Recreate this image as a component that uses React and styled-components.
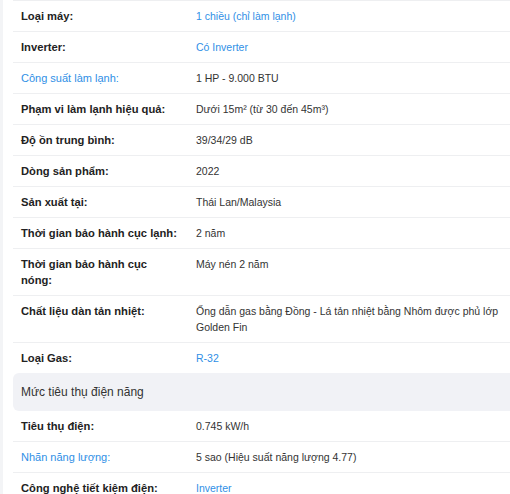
import React from "react";
import styled, { createGlobalStyle } from "styled-components";

const GlobalStyle = createGlobalStyle`
  html, body {
    margin: 0;
    padding: 0;
    background: #f3f4f6;
    font-family: "Liberation Sans", Arial, sans-serif;
    overflow: hidden;
  }
`;

const specs = [
  { label: "Loại máy:", value: "1 chiều (chỉ làm lạnh)", valueLink: true },
  { label: "Inverter:", value: "Có Inverter", valueLink: true },
  { label: "Công suất làm lạnh:", value: "1 HP - 9.000 BTU", labelLink: true },
  { label: "Phạm vi làm lạnh hiệu quả:", value: "Dưới 15m² (từ 30 đến 45m³)" },
  { label: "Độ ồn trung bình:", value: "39/34/29 dB" },
  { label: "Dòng sản phẩm:", value: "2022" },
  { label: "Sản xuất tại:", value: "Thái Lan/Malaysia" },
  { label: "Thời gian bảo hành cục lạnh:", value: "2 năm" },
  { label: "Thời gian bảo hành cục nóng:", value: "Máy nén 2 năm" },
  {
    label: "Chất liệu dàn tản nhiệt:",
    value:
      "Ống dẫn gas bằng Đồng - Lá tản nhiệt bằng Nhôm được phủ lớp Golden Fin",
  },
  { label: "Loại Gas:", value: "R-32", valueLink: true },
];

const power = [
  { label: "Tiêu thụ điện:", value: "0.745 kW/h" },
  {
    label: "Nhãn năng lượng:",
    value: "5 sao (Hiệu suất năng lượng 4.77)",
    labelLink: true,
  },
  { label: "Công nghệ tiết kiệm điện:", value: "Inverter", valueLink: true },
];

const App = () => {
  return (
    <>
      <GlobalStyle />
      <Panel>
        <SpecList>
          {specs.map((s) => (
            <SpecRow key={s.label}>
              <Label link={s.labelLink}>{s.label}</Label>
              <Value link={s.valueLink}>{s.value}</Value>
            </SpecRow>
          ))}
        </SpecList>
        <GroupTitle>Mức tiêu thụ điện năng</GroupTitle>
        <SpecList>
          {power.map((s) => (
            <SpecRow key={s.label}>
              <Label link={s.labelLink}>{s.label}</Label>
              <Value link={s.valueLink}>{s.value}</Value>
            </SpecRow>
          ))}
        </SpecList>
      </Panel>
    </>
  );
};

export default App;

const Panel = styled.div`
  margin-left: 3px;
  padding-left: 10px;
  width: 497px;
  height: 494px;
  background: #fff;
  overflow: hidden;
`;

const SpecList = styled.ul`
  list-style: none;
  margin: 0;
  padding: 0;

  &:first-child {
    border-top: 1px solid #eeeff1;
  }
`;

const SpecRow = styled.li`
  display: flex;
  border-bottom: 1px solid #eeeff1;
  line-height: 16px;

  &:last-child {
    border-bottom: none;
  }
`;

const Label = styled.div`
  flex: 0 0 175px;
  box-sizing: border-box;
  padding: 7px 9px 7px 8px;
  font-size: ${(p) => (p.link ? "11px" : "11.2px")};
  font-weight: ${(p) => (p.link ? 400 : 700)};
  color: ${(p) => (p.link ? "#2f8fe6" : "#222")};
`;

const Value = styled.div`
  flex: 1;
  padding: 7px 8px;
  font-size: 10.5px;
  color: ${(p) => (p.link ? "#2f8fe6" : "#333")};
`;

const GroupTitle = styled.div`
  height: 38px;
  display: flex;
  align-items: center;
  padding: 0 8px;
  background: #f1f2f6;
  border-radius: 6px 0 0 6px;
  font-size: 12px;
  color: #333;
`;
